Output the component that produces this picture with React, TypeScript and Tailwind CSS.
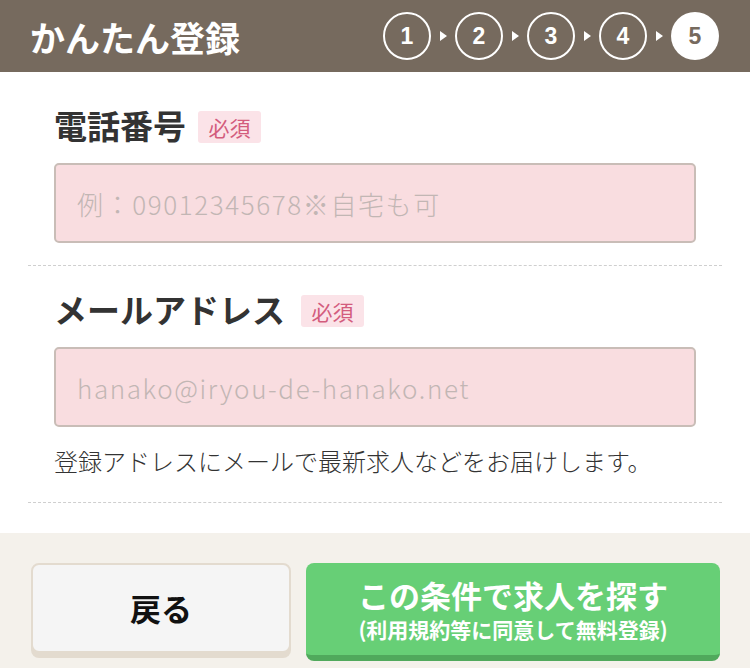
import React from "react";

const jp = "font-['Noto_Sans_CJK_JP','Noto_Sans',sans-serif]";

const StepCircle: React.FC<{ n: number; active?: boolean }> = ({ n, active }) => (
  <div
    className={
      "w-[48px] h-[48px] rounded-full flex items-center justify-center text-[23px] font-bold font-['Liberation_Sans',sans-serif] " +
      (active ? "bg-white text-[#766a5e]" : "border-2 border-white text-white")
    }
  >
    {n}
  </div>
);

const Arrow = () => (
  <svg width="24" height="12" viewBox="0 0 24 12" className="shrink-0">
    <path d="M9 1 L16 6 L9 11 Z" fill="#ffffff" />
  </svg>
);

const Badge: React.FC<{ gap: string }> = ({ gap }) => (
  <span className={gap + " h-[32px] w-[63px] rounded-[3px] bg-[#fbe3e8] text-[#d35c7d] text-[21px] leading-none flex items-center justify-center"}>
    必須
  </span>
);

const Field: React.FC<{ placeholder: string }> = ({ placeholder }) => (
  <input
    type="text"
    placeholder={placeholder}
    className="mt-[20px] block w-full h-[80px] rounded-[5px] border-2 border-[#c9bdb7] bg-[#f9dde0] px-[21px] text-[26px] font-light tracking-[1.6px] text-[#555] placeholder:text-[#c2b6b4] outline-none"
  />
);

export default function App() {
  return (
    <div className={"w-[750px] h-[668px] bg-white flex flex-col " + jp}>
      <header className="h-[72px] bg-[#766a5e] flex items-center justify-between pl-[30px] pr-[31px]">
        <h1 className="text-white text-[35px] font-bold leading-none">かんたん登録</h1>
        <div className="flex items-center">
          {[1, 2, 3, 4].map((n) => (
            <React.Fragment key={n}>
              <StepCircle n={n} />
              <Arrow />
            </React.Fragment>
          ))}
          <StepCircle n={5} active />
        </div>
      </header>

      <main className="mx-[28px] pb-[30px]">
        <section className="px-[26px] pt-[39px] pb-[22px] border-b border-dashed border-[#cfcfcf]">
          <div className="flex items-center h-[32px]">
            <h2 className="text-[33px] font-bold text-[#333] leading-none -mt-[4px]">電話番号</h2>
            <Badge gap="ml-[12px]" />
          </div>
          <Field placeholder="例：09012345678※自宅も可" />
        </section>

        <section className="px-[26px] pt-[29px] pb-[24px] border-b border-dashed border-[#cfcfcf]">
          <div className="flex items-center h-[32px]">
            <h2 className="text-[33px] font-bold text-[#333] leading-none -mt-[4px]">メールアドレス</h2>
            <Badge gap="ml-[16px]" />
          </div>
          <Field placeholder="hanako@iryou-de-hanako.net" />
          <p className="mt-[17px] text-[24px] leading-[34px] font-light text-[#333]">
            登録アドレスにメールで最新求人などをお届けします。
          </p>
        </section>
      </main>

      <footer className="flex-1 bg-[#f4f1eb] flex items-start gap-[15px] pt-[30px] pl-[31px] pr-[30px]">
        <button className="w-[260px] h-[90px] rounded-[8px] border-2 border-[#e3dbcf] bg-[#f5f5f5] shadow-[0_5px_0_#e3dbcf] text-[31px] font-bold text-[#111]">
          戻る
        </button>
        <button className="flex-1 h-[98px] rounded-[8px] bg-[#67cf76] border-b-[6px] border-[#50a95c] text-white flex flex-col items-center justify-center">
          <span className="text-[31px] font-bold leading-[40px]">この条件で求人を探す</span>
          <span className="text-[21px] font-bold leading-[28px]">(利用規約等に同意して無料登録)</span>
        </button>
      </footer>
    </div>
  );
}
